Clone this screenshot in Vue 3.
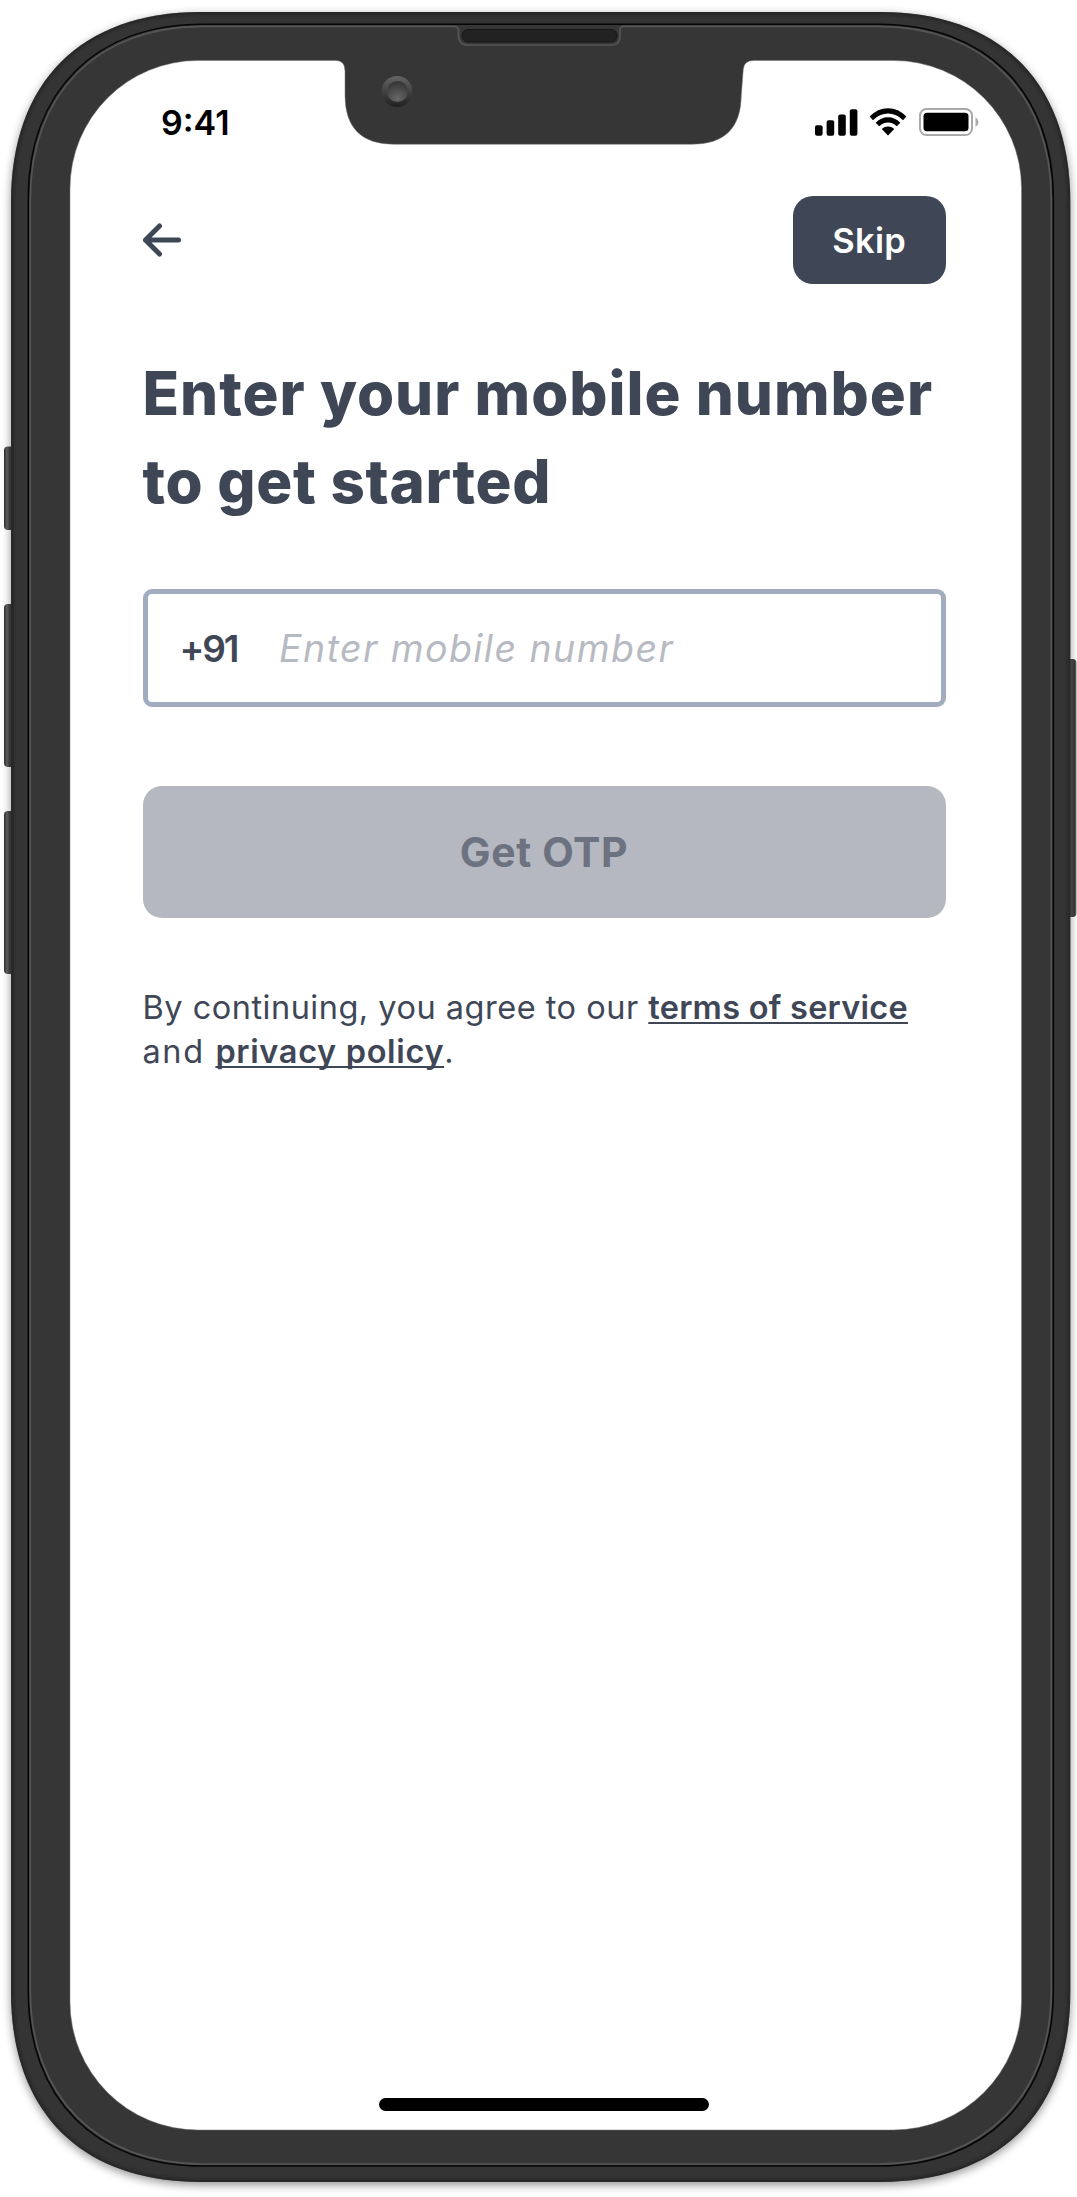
<script setup>
import { ref } from 'vue'

const phone = ref('')
const bars = [
  { x: 0, h: 10.5 },
  { x: 11.6, h: 15.5 },
  { x: 23.2, h: 21.2 },
  { x: 34.8, h: 26.5 },
]
</script>

<template>
  <div class="device">
    <svg class="hardware" viewBox="0 0 1077 2197" width="1077" height="2197" aria-hidden="true">
      <defs>
        <linearGradient id="keyLeft" x1="0" x2="1">
          <stop offset="0" stop-color="#2a2a2a" />
          <stop offset=".2" stop-color="#5c5e5d" />
          <stop offset=".4" stop-color="#373938" />
          <stop offset="1" stop-color="#2b2c2b" />
        </linearGradient>
        <linearGradient id="keyRight" x1="0" x2="1">
          <stop offset="0" stop-color="#2c2c2c" />
          <stop offset=".65" stop-color="#454545" />
          <stop offset=".85" stop-color="#333" />
          <stop offset="1" stop-color="#777" />
        </linearGradient>
        <linearGradient id="ring" x1="0" y1="0" x2="0" y2="1">
          <stop offset="0" stop-color="#646464" />
          <stop offset="1" stop-color="#202020" />
        </linearGradient>
        <radialGradient id="lens" cx=".5" cy=".85" r=".8">
          <stop offset="0" stop-color="#676767" />
          <stop offset="1" stop-color="#363636" />
        </radialGradient>
        <filter id="shadow" x="-5%" y="-5%" width="110%" height="110%">
          <feGaussianBlur stdDeviation="5" />
        </filter>
        <filter id="soft" x="-5%" y="-5%" width="110%" height="110%">
          <feGaussianBlur stdDeviation="1.6" />
        </filter>
        <path id="body" d="M201 12H880C1000 12 1070.300 82 1070.300 202V1992C1070.300 2112 1000 2182 880 2182H201C81 2182 11 2112 11 1992V202C11 82 81 12 201 12Z" />
        <clipPath id="bodyClip"><use href="#body" /></clipPath>
      </defs>
      <use href="#body" fill="#000" opacity=".42" filter="url(#shadow)" transform="translate(0 3)" />
      <rect x="4" y="446.500" width="14" height="83.500" rx="4" fill="url(#keyLeft)" />
      <rect x="4" y="604" width="14" height="163" rx="4" fill="url(#keyLeft)" />
      <rect x="4" y="811" width="14" height="163" rx="4" fill="url(#keyLeft)" />
      <rect x="1063" y="659" width="13.500" height="258" rx="4" fill="url(#keyRight)" />
      <use href="#body" fill="#343434" />
      <g clip-path="url(#bodyClip)">
        <use href="#body" fill="none" stroke="#1c1c1c" stroke-width="5" filter="url(#soft)" opacity=".6" />
      </g>
      <path d="M203 24.300H878C986 24.300 1053.300 92 1053.300 199V1991C1053.300 2098 986 2166 878 2166H203C95 2166 28.300 2098 28.300 1991V199C28.300 92 95 24.300 203 24.300Z" fill="#363636" stroke="#050505" stroke-width="1.600" />
      <path d="M624 26.300H878C984 26.300 1051.300 94 1051.300 199V1991C1051.300 2096 984 2164 878 2164H203C97 2164 30.300 2096 30.300 1991V199C30.300 94 97 26.300 203 26.300H454Q458.500 26.300 458.500 31V35Q458.500 45 468 45H612Q620 45 620 36V30Q620 26.300 624 26.300" fill="none" stroke="#555" stroke-width="1.700" />
      <rect x="462" y="29.500" width="155" height="12.500" rx="6" fill="#222" stroke="#171717" />
      <path d="M198 60.500H336Q345 60.500 345 71V95Q345 144.300 394 144.300H692Q741 144.300 741.300 95L743.300 69Q744 60.500 754 60.500H893.500A128 128 0 0 1 1021.500 188.500V2002A128 128 0 0 1 893.500 2130H198A128 128 0 0 1 70 2002V188.500A128 128 0 0 1 198 60.500Z" fill="#fff" stroke="#777" stroke-width=".5" />
      <circle cx="397" cy="91.500" r="15.500" fill="url(#ring)" />
      <circle cx="397.500" cy="91.500" r="10.500" fill="url(#lens)" />
    </svg>

    <main class="screen">
      <header class="status">
        <span class="clock">9:41</span>
        <div class="signals">
          <svg width="43" height="27" viewBox="0 0 43 27">
            <rect v-for="b in bars" :key="b.x" :x="b.x" :y="26.7 - b.h" width="7.6" :height="b.h" rx="2" />
          </svg>
          <svg class="wifi" width="38" height="28" viewBox="0 0 38 28">
            <path d="M.6 8.600Q8.500 .2 19 .2T37.400 8.600L34 12.200Q27.500 5.400 19 5.400T4 12.200Z" />
            <path d="M6.700 14.700Q12 9.200 19 9.200T31.300 14.700L27.800 18.200Q24.200 14.400 19 14.400T10.200 18.200Z" />
            <path d="M12.700 21Q15.500 18.600 19 18.600T25.300 21L19 27.400Z" />
          </svg>
          <svg class="battery" width="60" height="28" viewBox="0 0 60 28">
            <rect x="1" y="1" width="52" height="26" rx="6.500" fill="none" stroke="#a9a9a9" stroke-width="2" />
            <rect x="4.500" y="4.800" width="45" height="18.400" rx="3.500" />
            <path d="M56.500 9.300Q59.500 11 59.500 14T56.500 18.700Z" fill="#a9a9a9" />
          </svg>
        </div>
      </header>

      <nav class="topbar">
        <button class="back" aria-label="Back">
          <svg width="40" height="34" viewBox="0 0 40 34">
            <path d="M36.500 17H3.500M17.500 3L3.500 17L17.500 31" fill="none" stroke="#3f4757" stroke-width="5" stroke-linecap="round" stroke-linejoin="round" />
          </svg>
        </button>
        <button class="skip">Skip</button>
      </nav>

      <h1><span class="line-one">Enter your mobile number</span><br /><span class="line-two">to get started</span></h1>

      <label class="field">
        <span class="code">+91</span>
        <input v-model="phone" type="tel" placeholder="Enter mobile number" />
      </label>

      <button class="otp">Get OTP</button>

      <p class="legal">
        <span class="intro">By continuing, you agree to our </span><a class="terms">terms of service</a><br />
        <span class="and">and </span><a class="privacy">privacy policy</a>.
      </p>

      <div class="home"></div>
    </main>
  </div>
</template>

<style>
body {
  margin: 0;
  background: #fff;
}
</style>

<style scoped>
.device {
  position: relative;
  width: 1077px;
  height: 2197px;
  overflow: hidden;
  font-family: Inter, "Liberation Sans", sans-serif;
  color: #3f4757;
}
.hardware {
  position: absolute;
  inset: 0;
}
.screen {
  position: relative;
  box-sizing: border-box;
  height: 2197px;
  padding: 108px 131.500px 86.500px 142.500px;
  display: flex;
  flex-direction: column;
}
button {
  border: 0;
  padding: 0;
  margin: 0;
  font: inherit;
  color: inherit;
  background: none;
}
.status {
  height: 28px;
  display: flex;
  justify-content: space-between;
  align-items: center;
  margin: 0 -33.500px 0 18.500px;
  color: #000;
}
.clock {
  padding-top: 2px;
  font-size: 34px;
  font-weight: 600;
  line-height: 28px;
}
.signals {
  display: flex;
  align-items: center;
}
.signals svg {
  display: block;
}
.wifi {
  margin-left: 11px;
}
.battery {
  margin-left: 12.500px;
}
.topbar {
  display: flex;
  justify-content: space-between;
  align-items: center;
  margin-top: 60px;
  height: 88px;
}
.back {
  margin-left: -1px;
}
.back svg {
  display: block;
}
.skip {
  width: 152.500px;
  height: 88px;
  border-radius: 20px;
  background: #3f4757;
  color: #fff;
  font-size: 34.500px;
  font-weight: 600;
  letter-spacing: 0.300px;
}
h1 {
  margin: 65px 0 0;
  font-size: 60px;
  line-height: 88px;
  font-weight: 800;
  white-space: nowrap;
}
.line-one {
  letter-spacing: 1px;
}
.line-two {
  letter-spacing: 0.700px;
}
.field {
  box-sizing: border-box;
  margin-top: 64px;
  height: 118px;
  border: 5px solid #a2acbf;
  border-radius: 9px;
  display: flex;
  align-items: center;
  padding-left: 32px;
}
.code {
  width: 99.500px;
  font-size: 37px;
  font-weight: 600;
  letter-spacing: -2.200px;
}
input {
  flex: 1;
  min-width: 0;
  border: 0;
  padding: 0;
  outline: 0;
  background: none;
  font: italic 400 37.500px Inter, "Liberation Sans", sans-serif;
  letter-spacing: 1.450px;
}
input::placeholder {
  color: #b7bac2;
  opacity: 1;
}
.otp {
  margin-top: 79px;
  height: 132px;
  border-radius: 19px;
  background: #b5b8c0;
  color: #6c7280;
  font-size: 41px;
  font-weight: 700;
  letter-spacing: 0.600px;
}
.legal {
  margin: 68px 0 0;
  font-size: 32.500px;
  line-height: 44.400px;
  white-space: nowrap;
}
.legal a {
  font-weight: 600;
  text-decoration: underline;
  text-decoration-thickness: 2px;
  text-underline-offset: 3px;
  text-decoration-skip-ink: none;
}
.intro {
  letter-spacing: 0.500px;
}
.terms {
  letter-spacing: 0.250px;
}
.and {
  letter-spacing: 1.600px;
}
.privacy {
  letter-spacing: 0.650px;
}
.home {
  width: 330px;
  height: 12.500px;
  border-radius: 7px;
  background: #000;
  margin: auto auto 0 236.500px;
}
</style>
